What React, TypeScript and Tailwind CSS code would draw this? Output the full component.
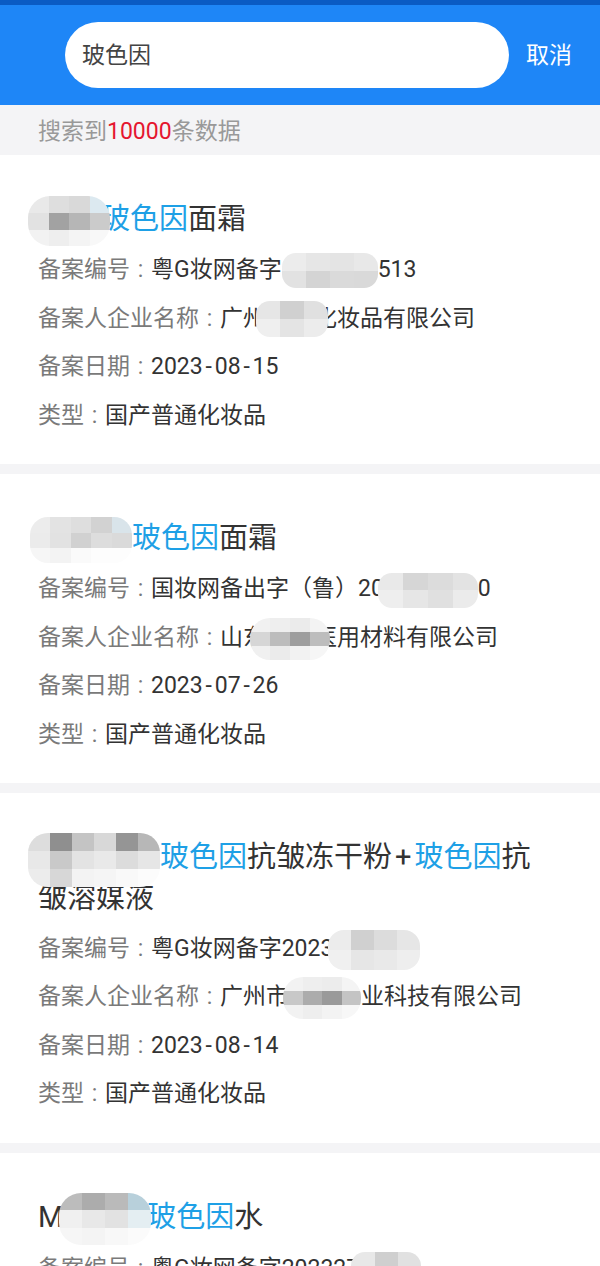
import React from 'react';

type Row = { label: string; value: React.ReactNode };

const FONT = "font-['Roboto','Noto_Sans_CJK_SC',sans-serif]";

// pixelated privacy mosaic laid over text
function Mosaic({ w, h, cells, className = '' }: { w: number; h: number; cells: string[][]; className?: string }) {
  return (
    <span
      className={`relative z-10 inline-grid align-middle overflow-hidden blur-[0.7px] ${className}`}
      style={{ width: w, height: h, gridTemplateColumns: `repeat(${cells[0].length}, 1fr)` }}
    >
      {cells.flat().map((c, i) => (
        <span key={i} style={{ backgroundColor: c }} />
      ))}
    </span>
  );
}

const Hl = ({ children }: { children: React.ReactNode }) => <span className="text-[#1ea0e6]">{children}</span>;

// dates use a wide dash in the app font
function DateText({ value }: { value: string }) {
  const parts = value.split('-');
  return (
    <>
      {parts.map((p, i) => (
        <React.Fragment key={i}>
          {i > 0 && <span className="inline-block w-[12px] text-center">-</span>}
          {p}
        </React.Fragment>
      ))}
    </>
  );
}

function Card({ title, rows }: { title: React.ReactNode; rows: Row[] }) {
  return (
    <section className="bg-white pl-[38px] pt-[45px] pb-[24px]">
      <h2 className="pr-[55px] text-[29px] leading-[38px] text-[#333] font-normal">{title}</h2>
      <div className="mt-[8px] text-[23px] leading-[48.5px]">
        {rows.map((r) => (
          <div key={r.label} className="whitespace-nowrap">
            <span className="text-[#7a7a7a]">{r.label}</span>
            <span className="inline-block w-[21px] text-center text-[#7a7a7a]">:</span>
            <span className="text-[#333]">{r.value}</span>
          </div>
        ))}
      </div>
    </section>
  );
}

export default function App() {
  return (
    <div className={`w-[600px] min-h-[1266px] bg-[#f4f4f6] ${FONT}`}>
      {/* header */}
      <div className="h-[5px] bg-[#0a5bc4]" />
      <div className="h-[100px] bg-[#1e86f7] flex items-center pl-[65px] pr-[28px]">
        <div className="flex-1 h-[66px] rounded-full bg-white flex items-center pl-[17px] pt-[3px]">
          <input
            readOnly
            value="玻色因"
            className={`w-full bg-transparent outline-none text-[23px] text-[#444] ${FONT}`}
          />
        </div>
        <button className="ml-[17px] pt-[2px] text-[23px] text-white">取消</button>
      </div>

      <div className="h-[50px] flex items-center pl-[38px] pt-[5px] text-[23px] text-[#999]">
        搜索到<span className="text-[#e5162f]">10000</span>条数据
      </div>

      <div className="flex flex-col gap-[10px]">
        <Card
          title={
            <>
              <Mosaic
                w={82}
                h={50}
                className="ml-[-10px] mr-[-9px] my-[-12px] rounded-[22px]"
                cells={[
                  ['#e9e9e9', '#dedede', '#d9d9d9', '#dce9f0'],
                  ['#e2e2e2', '#a2a2a2', '#b6b6b6', '#cbcbcb'],
                  ['#f2f2f2', '#eeeeee', '#f4f4f4', '#f8f8f8'],
                ]}
              />
              <Hl>玻色因</Hl>面霜
            </>
          }
          rows={[
            {
              label: '备案编号',
              value: (
                <>
                  粤G妆网备字
                  <Mosaic
                    w={96}
                    h={35}
                    className="rounded-[14px]"
                    cells={[
                      ['#ececec', '#e6e6e6', '#e4e4e4', '#e8e8e8'],
                      ['#e2e2e2', '#d4d4d4', '#dadada', '#d9d9d9'],
                    ]}
                  />
                  513
                </>
              ),
            },
            {
              label: '备案人企业名称',
              value: (
                <>
                  广州
                  <Mosaic
                    w={72}
                    h={36}
                    className="ml-[-10px] mr-[-14px] rounded-[14px]"
                    cells={[
                      ['#e6e6e6', '#d0d0d0', '#e0e0e0'],
                      ['#efefef', '#e4e4e4', '#ececec'],
                    ]}
                  />
                  化妆品有限公司
                </>
              ),
            },
            { label: '备案日期', value: <DateText value="2023-08-15" /> },
            { label: '类型', value: '国产普通化妆品' },
          ]}
        />

        <Card
          title={
            <>
              <Mosaic
                w={102}
                h={46}
                className="ml-[-8px] my-[-6px] rounded-[18px]"
                cells={[
                  ['#ececec', '#e3e3e3', '#dedede', '#d2d2d2', '#d9e4ea'],
                  ['#ebebeb', '#e2e2e2', '#d1d1d1', '#dddddd', '#dadada'],
                  ['#f6f6f6', '#f3f3f3', '#fafafa', '#fdfdfd', '#fdfdfd'],
                ]}
              />
              <Hl>玻色因</Hl>面霜
            </>
          }
          rows={[
            {
              label: '备案编号',
              value: (
                <>
                  国妆网备出字（鲁）20
                  <Mosaic
                    w={100}
                    h={35}
                    className="ml-[-6px] rounded-[14px]"
                    cells={[
                      ['#e9e9e9', '#d6d6d6', '#dcdcdc', '#e3e3e3'],
                      ['#eeeeee', '#e6e6e6', '#e0e0e0', '#ebebeb'],
                    ]}
                  />
                  0
                </>
              ),
            },
            {
              label: '备案人企业名称',
              value: (
                <>
                  山东
                  <Mosaic
                    w={80}
                    h={42}
                    className="ml-[-16px] mr-[-16px] rounded-[20px]"
                    cells={[
                      ['#f1f1f1', '#eeeeee', '#ebebeb', '#f3f3f3'],
                      ['#d6d6d6', '#bcbcbc', '#9e9e9e', '#bdbdbd'],
                      ['#f0f0f0', '#ebebeb', '#f2f2f2', '#f6f6f6'],
                    ]}
                  />
                  医用材料有限公司
                </>
              ),
            },
            { label: '备案日期', value: <DateText value="2023-07-26" /> },
            { label: '类型', value: '国产普通化妆品' },
          ]}
        />

        <Card
          title={
            <>
              <Mosaic
                w={132}
                h={54}
                className="ml-[-10px] my-[-8px] rounded-[20px]"
                cells={[
                  ['#dddddd', '#8f8f8f', '#c4c4c4', '#d8d8d8', '#959595', '#b7b7b7'],
                  ['#e8e8e8', '#c9c9c9', '#e3e3e3', '#e9e9e9', '#dcdcdc', '#e6e6e6'],
                  ['#ececec', '#d7d7d7', '#f3f3f3', '#f5f5f5', '#f9f9f9', '#fcfcfc'],
                ]}
              />
              <Hl>玻色因</Hl>抗皱冻干粉<span className="inline-block px-[3px]">+</span><Hl>玻色因</Hl>抗皱溶媒液
            </>
          }
          rows={[
            {
              label: '备案编号',
              value: (
                <>
                  粤G妆网备字2023
                  <Mosaic
                    w={92}
                    h={40}
                    className="ml-[-5px] rounded-[16px]"
                    cells={[
                      ['#ececec', '#d0d0d0', '#dcdcdc', '#e6e6e6'],
                      ['#f0f0f0', '#e6e6e6', '#e9e9e9', '#eeeeee'],
                    ]}
                  />
                </>
              ),
            },
            {
              label: '备案人企业名称',
              value: (
                <>
                  广州市
                  <Mosaic
                    w={78}
                    h={42}
                    className="ml-[-6px] rounded-[20px]"
                    cells={[
                      ['#f2f2f2', '#eeeeee', '#ececec', '#f4f4f4'],
                      ['#c8c8c8', '#acacac', '#9a9a9a', '#c4c4c4'],
                      ['#f2f2f2', '#eeeeee', '#f3f3f3', '#f7f7f7'],
                    ]}
                  />
                  业科技有限公司
                </>
              ),
            },
            { label: '备案日期', value: <DateText value="2023-08-14" /> },
            { label: '类型', value: '国产普通化妆品' },
          ]}
        />

        <Card
          title={
            <>
              M
              <Mosaic
                w={92}
                h={52}
                className="ml-[-4px] mr-[-4px] my-[-8px] rounded-[22px]"
                cells={[
                  ['#bcbcbc', '#acacac', '#bababa', '#b8d0db'],
                  ['#f0f0f0', '#e8e8e8', '#e2e2e2', '#e4eef2'],
                  ['#f6f6f6', '#f4f4f4', '#f8f8f8', '#fbfbfb'],
                ]}
              />
              <Hl>玻色因</Hl>水
            </>
          }
          rows={[
            {
              label: '备案编号',
              value: (
                <>
                  粤G妆网备字202327
                  <Mosaic
                    w={70}
                    h={36}
                    className="ml-[-8px] rounded-[14px]"
                    cells={[
                      ['#e8e8e8', '#cfcfcf', '#e1e1e1'],
                      ['#efefef', '#e6e6e6', '#ececec'],
                    ]}
                  />
                </>
              ),
            },
          ]}
        />
      </div>
    </div>
  );
}
